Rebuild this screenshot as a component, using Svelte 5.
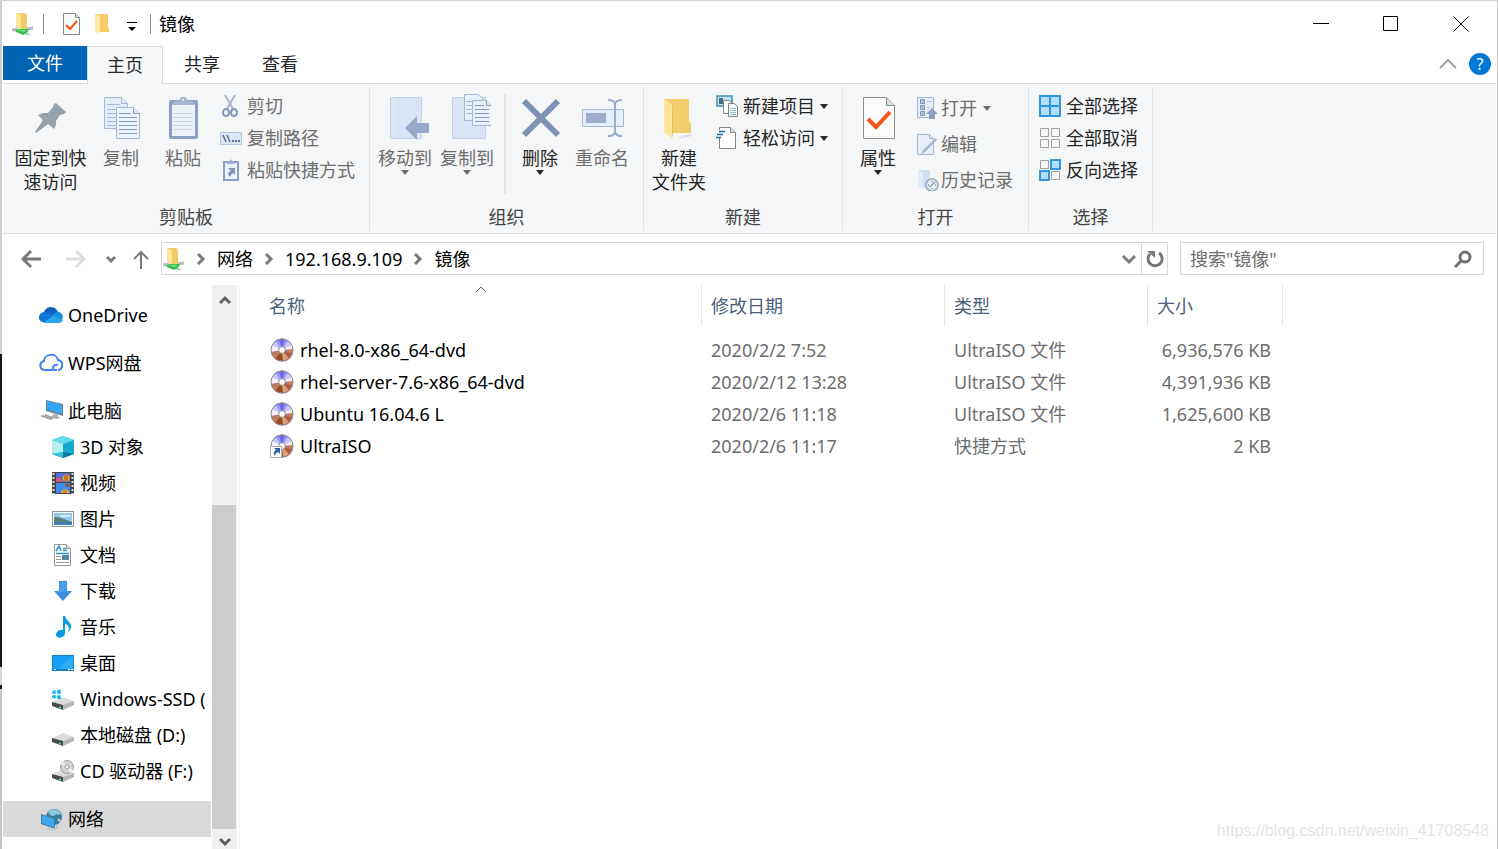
<script>
	// ICONS

	const netFolder =
		'<path d="M4 0h10v2h1v14H7z" fill="#f0cb66"/><path d="M4 0l5 2v14l-5-2z" fill="#ffe597"/><path d="M0 17l6-1M21 15l-6 1" stroke="#b9bcc0" stroke-width="3"/><path d="M3 17l5-1 9 0-2 4-4 2-7-3z" fill="#35c050"/><path d="M6 17h8l-2 2z" fill="#83e28c"/><path d="M14 21l4 1" stroke="#b9bcc0" stroke-width="2"/>';
	const folder =
		'<path d="M3 1h13v13l1 1v4H6z" fill="#f4cd69"/><path d="M3 1l5 3v14l-1 3-4-3z" fill="#ffe8a0"/>';
	const disc =
		'<circle cx="12" cy="12" r="11" fill="#f4f2f8"/><path d="M12 12L2 7A11 11 0 0 1 22 7z" fill="#c9c7f8"/><path d="M12 12L5 3A11 11 0 0 1 18 3z" fill="#9c9af4"/><path d="M12 12L9 1a11 11 0 0 1 6 0z" fill="#6d69ee"/><path d="M12 12L1 14a11 11 0 0 0 22-3z" fill="#c07c58"/><path d="M12 12L5 21a11 11 0 0 0 8 2z" fill="#9a4a28"/><path d="M12 12l1 11a11 11 0 0 0 6-3z" fill="#dda27d"/><path d="M12 12l7 8a11 11 0 0 0 3-4z" fill="#aa5c38"/><circle cx="12" cy="12" r="11" fill="none" stroke="#8b8791" stroke-width="1"/><circle cx="12" cy="12" r="3.4" fill="#fff" stroke="#8d8a96"/>';
	const drive =
		'<path d="M0 14l11-5 11 4-10 5z" fill="#dcdcdd"/><path d="M11 17l11-4v4l-11 5z" fill="#b5b5b6"/><path d="M0 14l11 3v5L0 18z" fill="#4a4a4b"/><path d="M7 19l2 1" stroke="#4ee06a" stroke-width="1.4"/>';

	const icons = {
		netFolder,
		folder,
		disc,
		drive,
		shortcut:
			disc +
			'<path d="M.5 12.500h11v11h-11z" fill="#fff" stroke="#aaa"/><path d="M4 14h6v6l-2-2c-2 1-3 2-3 4-2-3-1-5 1-6z" fill="#2b5fa8"/>',
		checkDoc:
			'<path d="M2.500.500h12l4 4v17h-16z" fill="#fafafa" stroke="#8a8a8a"/><path d="M14.500.500v4h4" fill="#ddd" stroke="#8a8a8a"/><path d="M5 12l4 4 7-8" fill="none" stroke="#f1591b" stroke-width="2.200"/>',

		// large ribbon icons
		pin: '<path d="M29 9l10 9-2 2-4 1-4 6v4l-2 4-6-5L9 39l-1-1 8-12-5-5 5-2h5l5-6 1-3z" fill="#96a2ab"/>',
		copy: '<g fill="#e2ebf8" stroke="#a4b7d8"><path d="M7.500 3.500h17l6 6v25h-23z"/><path d="M24.500 3.500v6h6M10 10.500h13M10 15.500h18M10 19.500h18M10 23.500h18M10 27.500h18M10 31.500h18"/><path d="M19.500 13.500h17l6 6v25h-23z" fill="#edf3fc"/><path d="M36.500 13.500v6h6M22 19.500h12M22 23.500h18M22 27.500h18M22 31.500h18M22 35.500h18M22 39.500h18" stroke="#8299c2"/></g>',
		paste:
			'<rect x="10" y="6" width="29" height="39" rx="2" fill="#8ba0c5"/><path d="M13 10h23v32H13z" fill="#edf2fa"/><path d="M14 19.500h20M14 23.500h20M14 27.500h20M14 31.500h20M14 35.500h20" stroke="#cbd7e9"/><path d="M13 11l3-4h4l2-4h5l2 4h4l3 4z" fill="#a9b8d2"/><circle cx="24" cy="6" r="1" fill="#edf2fa"/>',
		moveTo: '<path d="M9.500 3.500h31v41h-31z" fill="#d9e4f4" stroke="#c2d1e6"/><path d="M13 5v38" stroke="#e8eff9"/><path d="M24 34l12-12v7h12v10H36v7z" fill="#97a9c8"/>',
		copyTo:
			'<path d="M9.500 3.500h33v41h-33z" fill="#d9e4f4" stroke="#c2d1e6"/><g fill="#e9f1fb" stroke="#a4b7d8"><path d="M21.500.500h14l4 4v22h-18z"/><path d="M23 7.500h13M23 11.500h13M23 15.500h13M23 19.500h13"/><path d="M29.500 6.500h14l5 5v20h-19z"/><path d="M43.500 6.500v5h5M32 11.500h9M32 15.500h14M32 19.500h14M32 23.500h14M32 27.500h14" stroke="#8299c2"/></g>',
		remove: '<path d="M8 7l34 34M42 7L8 41" stroke="#7e92b5" stroke-width="6"/>',
		rename:
			'<path d="M4.500 15.500h41v17h-41z" fill="#e6eefa" stroke="#a5b7d5"/><path d="M8 19h20v10H8z" fill="#9badcb"/><path d="M30 6c5 0 7 2 7 5v26c0 3-2 5-7 5M44 6c-5 0-7 2-7 5M37 37c0 3 2 5 7 5" fill="none" stroke="#9aabc8" stroke-width="2"/>',
		newFolder:
			'<path d="M20 45l17-3-3-2z" fill="#d9dadd"/><path d="M9 5h25v22l2 2v10H18z" fill="#f3cd6b"/><path d="M9 5l9 7v33l-9-7z" fill="#ffe49a"/><path d="M17 12l1-1v29l-1 3z" fill="#e9bd59"/>',
		properties:
			'<path d="M9.500 3.500h23l8 8v33h-31z" fill="#fbfbfb" stroke="#8c8c8c"/><path d="M32.500 3.500v8h8" fill="#dedede" stroke="#8c8c8c"/><path d="M14 25l8 8 14-15" fill="none" stroke="#f1591b" stroke-width="4"/>',

		// small ribbon icons
		cut: '<path d="M5 0l8 14M15 0L7 14" stroke="#a7b4cb" stroke-width="2"/><ellipse cx="6" cy="17.500" rx="3" ry="3.500" fill="none" stroke="#8398bd" stroke-width="2"/><ellipse cx="14" cy="17.500" rx="3" ry="3.500" fill="none" stroke="#8398bd" stroke-width="2"/>',
		path: '<path d="M.500 5.500h21v12H.500z" fill="#dce8f6" stroke="#b5c6df"/><path d="M3 8l3 7M7 8l3 7" stroke="#5d7195" stroke-width="1.500"/><path d="M12 14h2m1 0h2m1 0h2" stroke="#5d7195" stroke-width="2"/>',
		pasteLink:
			'<path d="M4 3h14v18H4z" fill="#edf3fb" stroke="#8ba0c5" stroke-width="2"/><path d="M7 5V3h2l2-3 2 3h2v2z" fill="#a0b2d0"/><path d="M8 9h7v7l-2-2c-2 1-2 2-3 4-3-3-2-5 1-6z" fill="#7a90b5"/>',
		newItem:
			'<path d="M1 1h15v10H1z" fill="#c5e5f4" stroke="#3f91b8" stroke-width="1.500"/><path d="M3 3h4v6H3z" fill="#47717c"/><g fill="#fff" stroke="#858585"><path d="M7.500 5.500h6l3 3v10h-9z"/><path d="M12.500 8.500h6l3 3v10h-9z"/></g><path d="M14 13.500h6M14 15.500h6M14 17.500h6M14 19.500h6" stroke="#9db9d8"/>',
		easyAccess:
			'<path d="M3.500.500h11l5 5v16h-16z" fill="#fff" stroke="#858585"/><path d="M14.500.500v5h5" fill="#ddd" stroke="#858585"/><path d="M0 3h8v7H0z" fill="#f5f6f7"/><path d="M3 4.500h6M1 7.500h6M0 10.500h5" stroke="#1f69b0" stroke-width="1.500"/>',
		open: '<path d="M.500.500h16v20H.500z" fill="#e8effa" stroke="#a5b7d5"/><g fill="#b0bfd7" stroke="#7f94b8"><path d="M3.500 2.500h4v4h-4zM3.500 8.500h4v4h-4zM3.500 14.500h4v4h-4z"/></g><path d="M10 4.500h5M10 10.500h3" stroke="#bac9df"/><path d="M9 17l6-6 6 6h-3v5h-6v-5z" fill="#8b9fbf"/>',
		edit: '<path d="M.500 1.500h12l4 4v16H.500z" fill="#e8effa" stroke="#a5b7d5"/><path d="M12.500 1.500v4h4" fill="none" stroke="#a5b7d5"/><path d="M6 17L19 5l1 2L8 19l-4 2z" fill="#a5b4cd"/>',
		history:
			'<path d="M1 1h12v18H6z" fill="#d1deef"/><path d="M1 1l5 3v17l-5-3z" fill="#e3ecf8"/><circle cx="15" cy="16" r="6" fill="#eaf0f8" stroke="#a6b4c9" stroke-width="2"/><path d="M11 16h1M18 16h1M15 12v1M15 19v1M12 18l3-2 3-3" fill="none" stroke="#8497b5" stroke-width="1.500"/>',
		selectAll:
			'<path d="M0 0h22v22H0z" fill="#3297e3"/><path d="M2 2h8v8H2zM12 2h8v8h-8zM2 12h8v8H2zM12 12h8v8h-8z" fill="#b3dffc"/>',
		selectNone:
			'<path d="M1.500 1.500h8v8h-8zM12.500 1.500h8v8h-8zM1.500 12.500h8v8h-8zM12.500 12.500h8v8h-8z" fill="#f7f7f7" stroke="#a0a0a0"/>',
		invert:
			'<path d="M1.500 1.500h8v8h-8zM12.500 12.500h8v8h-8z" fill="#f7f7f7" stroke="#a0a0a0"/><path d="M12 1h9v9h-9zM1 12h9v9H1z" fill="#b3dffc" stroke="#3297e3" stroke-width="2"/>',

		// navigation tree
		onedrive:
			'<path d="M4 12c0-3 3-8 8-8 4 0 6 3 7 5l-6 5z" fill="#0a62bd"/><path d="M3 19c-5-2-4-10 3-10 3 0 5 2 9 4l-8 6z" fill="#0f78d4"/><path d="M13 13c2-4 5-4 6-4 4 0 6 4 4 8z" fill="#1490df"/><path d="M4 20l10-7 10 4c-1 2-2 3-4 3z" fill="#28a8ea"/>',
		wps: '<path d="M18 19h-3c-3-3 1-6 4-5M14 19H6c-6 0-6-8-1-9 0-7 12-9 14-1 6 1 5 10 0 10" fill="none" stroke="#3f82f1" stroke-width="2"/>',
		computer:
			'<path d="M7 1l17 4v12L7 12z" fill="#707f8c"/><path d="M8 2l15 4v9L8 11z" fill="#35a8f5"/><path d="M15 15l4 1v2l3 1-5 1-5-2z" fill="#a9adb1"/><path d="M0 17l6-2 11 4-6 2z" fill="#c5c9cd"/><path d="M3 17l10 3M6 16l8 3" stroke="#8c9399"/>',
		cube: '<path d="M0 4l11-4 11 4v14l-11 4-11-4z" fill="#15a9cf"/><path d="M0 4l11-4 11 4-11 4z" fill="#64dce9"/><path d="M0 4l11 4v8L0 18z" fill="#b7eef1"/><path d="M11 16l11 2-11 4z" fill="#07789b"/><path d="M11 16L0 18l11 4z" fill="#37c0d5"/>',
		video:
			'<path d="M0 0h22v22H0z" fill="#454545"/><path d="M4 1h14v9H4z" fill="#4d6fe0"/><path d="M4 11h14v10H4z" fill="#3e8ced"/><path d="M1.500 1v21M20.500 1v21" stroke="#d9d9d9" stroke-width="2" stroke-dasharray="2 2"/><path d="M4 6l3-1 4 5H4z" fill="#df5175"/><circle cx="14" cy="6" r="3.500" fill="#e9b217"/><path d="M13 3v6M15 3v6" stroke="#b32f28"/><path d="M13 12h5l-2 3h-2z" fill="#a8452c"/><path d="M9 21c1-5 7-5 8 0z" fill="#eebd23"/><path d="M12 18v3M14 18v3" stroke="#d8432e"/>',
		picture:
			'<path d="M.500 3.500h21v15H.500z" fill="#fff" stroke="#8d9499"/><path d="M2 5h18v12H2z" fill="#8ecaf2"/><path d="M8 7h10v2H9z" fill="#d5edfa"/><path d="M2 9c6 0 10 2 18 5v1H2z" fill="#568278"/><path d="M2 14h18v3H2z" fill="#3e7eb0"/>',
		document:
			'<path d="M2.500.500h12l4 4v17h-16z" fill="#fff" stroke="#969696"/><path d="M14.500.500v4h4" fill="#ddd" stroke="#969696"/><path d="M4 7l3-5 2 5M11 4.500h3M11 6.500h4M4 9.500h13" fill="none" stroke="#3191c9" stroke-width="1.500"/><path d="M4 12.500h5M4 15.500h5M4 18.500h13" stroke="#9a9a9a"/><path d="M10 11h7v5h-7z" fill="#58889e"/>',
		download: '<path d="M7 1h8v10h5l-9 10-9-10h5z" fill="#3890df"/><path d="M8 2h6v10H8z" fill="#4ca0ea"/>',
		music:
			'<path d="M11 0h2c1 5 7 6 6 12-1 2-2 3-3 4 2-6 0-7-3-8v9c0 6-10 6-9 1 1-4 5-5 7-4z" fill="#0a9be5"/>',
		desktop:
			'<path d="M0 3h22v16H0z" fill="#137fc5"/><path d="M1 4h20v13H1z" fill="#16a0f7"/><path d="M21 4v13H6z" fill="#32abf9"/><path d="M2 17.500h2m12 0h2m1 0h2" stroke="#fff"/>',
		windows:
			drive +
			'<path d="M0 3l4-1v4H0zM5 2l4-1v5H5zM0 7h4v4l-4-1zM5 7h4v5l-4-1z" fill="#0ab5f2" stroke="#fff" stroke-width=".5"/>',
		cd:
			drive +
			'<circle cx="15" cy="7" r="6.500" fill="#d1d4d5" stroke="#989c9f"/><path d="M15 7L9 4l2-3zM15 7l6 3-3 3z" fill="#f0f0f0"/><circle cx="15" cy="7" r="2" fill="#fff" stroke="#999"/>',
		network:
			'<circle cx="15" cy="10" r="8" fill="#347f9f"/><path d="M9 5c5-5 11-2 13 2-3 2-4-1-6 1s-5 1-7-3z" fill="#8cc9da"/><path d="M2 7l14 4v11L2 17z" fill="#55788b"/><path d="M3 8l12 4v9L3 16z" fill="#37aaf2"/><path d="M8 21c4 3 8 2 11-2M19 12l3 3" fill="none" stroke="#bec7cb" stroke-width="2"/>',
	};

	// DATA

	const tabs = ["共享", "查看"];

	const groups = [
		{
			label: "剪贴板",
			name: "clipboard",
			large: [
				{ icon: "pin", lines: ["固定到快", "速访问"], wide: true },
				{ icon: "copy", lines: ["复制"], disabled: true },
				{ icon: "paste", lines: ["粘贴"], disabled: true },
			],
			small: [
				{ icon: "cut", label: "剪切", disabled: true },
				{ icon: "path", label: "复制路径", disabled: true },
				{ icon: "pasteLink", label: "粘贴快捷方式", disabled: true },
			],
		},
		{
			label: "组织",
			name: "organize",
			large: [
				{ icon: "moveTo", lines: ["移动到"], menu: true, disabled: true },
				{ icon: "copyTo", lines: ["复制到"], menu: true, disabled: true },
				{ icon: "remove", lines: ["删除"], menu: true, divider: true },
				{ icon: "rename", lines: ["重命名"], disabled: true },
			],
			small: [],
		},
		{
			label: "新建",
			name: "new",
			large: [{ icon: "newFolder", lines: ["新建", "文件夹"] }],
			small: [
				{ icon: "newItem", label: "新建项目", menu: true },
				{ icon: "easyAccess", label: "轻松访问", menu: true },
			],
		},
		{
			label: "打开",
			name: "open",
			large: [{ icon: "properties", lines: ["属性"], menu: true }],
			small: [
				{ icon: "open", label: "打开", menu: true, disabled: true },
				{ icon: "edit", label: "编辑", disabled: true },
				{ icon: "history", label: "历史记录", disabled: true },
			],
		},
		{
			label: "选择",
			name: "select",
			large: [],
			small: [
				{ icon: "selectAll", label: "全部选择" },
				{ icon: "selectNone", label: "全部取消" },
				{ icon: "invert", label: "反向选择" },
			],
		},
	];

	const crumbs = ["网络", "192.168.9.109", "镜像"];

	const tree = [
		[{ icon: "onedrive", label: "OneDrive" }],
		[{ icon: "wps", label: "WPS网盘" }],
		[
			{ icon: "computer", label: "此电脑" },
			{ icon: "cube", label: "3D 对象", child: true },
			{ icon: "video", label: "视频", child: true },
			{ icon: "picture", label: "图片", child: true },
			{ icon: "document", label: "文档", child: true },
			{ icon: "download", label: "下载", child: true },
			{ icon: "music", label: "音乐", child: true },
			{ icon: "desktop", label: "桌面", child: true },
			{ icon: "windows", label: "Windows-SSD (", child: true },
			{ icon: "drive", label: "本地磁盘 (D:)", child: true },
			{ icon: "cd", label: "CD 驱动器 (F:)", child: true },
		],
		[{ icon: "network", label: "网络" }],
	];

	const files = [
		{ icon: "disc", name: "rhel-8.0-x86_64-dvd", date: "2020/2/2 7:52", type: "UltraISO 文件", size: "6,936,576 KB" },
		{ icon: "disc", name: "rhel-server-7.6-x86_64-dvd", date: "2020/2/12 13:28", type: "UltraISO 文件", size: "4,391,936 KB" },
		{ icon: "disc", name: "Ubuntu 16.04.6 L", date: "2020/2/6 11:18", type: "UltraISO 文件", size: "1,625,600 KB" },
		{ icon: "shortcut", name: "UltraISO", date: "2020/2/6 11:17", type: "快捷方式", size: "2 KB" },
	];

	// STATE

	let selected = $state("网络");
	let query = $state("");
</script>

{#snippet icon(name, size)}
	<svg width={size} height={size} viewBox="0 0 {size} {size}" aria-hidden="true">{@html icons[name]}</svg>
{/snippet}

{#snippet chevron(points, size, color)}
	<svg width={size} height={size} viewBox="0 0 {size} {size}" aria-hidden="true">
		<polyline {points} fill="none" stroke={color} stroke-width="3" />
	</svg>
{/snippet}

<div class="window">
	<header class="titlebar">
		<div class="quick">
			{@render icon("netFolder", 22)}
			<span class="bar"></span>
			<button aria-label="属性">{@render icon("checkDoc", 22)}</button>
			<button aria-label="新建文件夹">{@render icon("folder", 22)}</button>
			<button class="customize" aria-label="自定义快速访问工具栏">
				<svg width="10" height="10"><path d="M0 .5h10" stroke="#000" /><path d="M1 5h8L5 9z" /></svg>
			</button>
			<span class="bar"></span>
		</div>
		<h1>镜像</h1>
		<div class="controls">
			<button aria-label="最小化"><svg width="16" height="16"><path d="M0 7.500h16" /></svg></button>
			<button aria-label="最大化"><svg width="16" height="16"><path d="M.5.5h14v14h-14z" /></svg></button>
			<button aria-label="关闭"><svg width="16" height="16"><path d="M.5.5l15 15M15.500.5l-15 15" /></svg></button>
		</div>
	</header>

	<nav class="tabs">
		<button class="file">文件</button>
		<button class="active">主页</button>
		{#each tabs as tab}
			<button>{tab}</button>
		{/each}
		<span class="spacer"></span>
		<button class="collapse" aria-label="折叠功能区">
			<svg width="18" height="12"><path d="M1 10l8-8 8 8" fill="none" stroke="#a0a0a0" stroke-width="2" /></svg>
		</button>
		<button class="help" aria-label="帮助"><span>?</span></button>
	</nav>

	<section class="ribbon">
		{#each groups as group}
			<div class="group {group.name}">
				<div class="commands">
					{#each group.large as item}
						{#if item.divider}
							<span class="divider"></span>
						{/if}
						<button class="large" class:wide={item.wide} disabled={item.disabled}>
							{@render icon(item.icon, 48)}
							{#each item.lines as line}
								<span>{line}</span>
							{/each}
							{#if item.menu}<i class="arrow"></i>{/if}
						</button>
					{/each}
					{#if group.small.length}
						<div class="stack">
							{#each group.small as item}
								<button class="small" disabled={item.disabled}>
									{@render icon(item.icon, 22)}
									<span>{item.label}</span>
									{#if item.menu}<i class="arrow"></i>{/if}
								</button>
							{/each}
						</div>
					{/if}
				</div>
				<div class="group-label">{group.label}</div>
			</div>
		{/each}
	</section>

	<div class="navbar">
		<button class="nav" aria-label="后退">
			<svg width="20" height="18"><path d="M10 1L2 9l8 8M2 9h18" fill="none" stroke="#7a7a7a" stroke-width="3" /></svg>
		</button>
		<button class="nav" aria-label="前进" disabled>
			<svg width="20" height="18"><path d="M10 1l8 8-8 8M18 9H0" fill="none" stroke="#dedede" stroke-width="3" /></svg>
		</button>
		<button class="recent" aria-label="最近浏览的位置">{@render chevron("1,3 5,7 9,3", 10, "#7a7a7a")}</button>
		<button class="up" aria-label="上移">
			<svg width="16" height="20"><path d="M1 10l7-7 7 7M8 3v17" fill="none" stroke="#7a7a7a" stroke-width="2" /></svg>
		</button>
		<div class="address">
			{@render icon("netFolder", 22)}
			{#each crumbs as crumb}
				<span class="step">{@render chevron("3,1 8,6 3,11", 12, "#7a7a7a")}</span>
				<a href="#{crumb}">{crumb}</a>
			{/each}
			<span class="spacer"></span>
			<button class="history" aria-label="以前的位置">{@render chevron("1,4 7,10 13,4", 14, "#7a7a7a")}</button>
			<button class="refresh" aria-label="刷新">
				<svg width="18" height="18">
					<path d="M13 3a7 7 0 1 1-9 1" fill="none" stroke="#7a7a7a" stroke-width="3" />
					<path d="M1 1h8v7z" fill="#7a7a7a" />
				</svg>
			</button>
		</div>
		<label class="search">
			<input type="text" placeholder={'搜索"镜像"'} aria-label="搜索" bind:value={query} />
			<svg width="18" height="18">
				<circle cx="11" cy="7" r="5" fill="none" stroke="#707070" stroke-width="3" />
				<path d="M8 10l-7 7" stroke="#707070" stroke-width="3" />
			</svg>
		</label>
	</div>

	<main>
		<aside>
			<div class="tree">
				{#each tree as branch}
					<div class="branch">
						{#each branch as node}
							<button
								class="node"
								class:child={node.child}
								class:selected={selected === node.label}
								onclick={() => (selected = node.label)}
							>
								{@render icon(node.icon, node.child ? 22 : 24)}
								<span>{node.label}</span>
							</button>
						{/each}
					</div>
				{/each}
			</div>
			<div class="scrollbar">
				<button aria-label="向上滚动">{@render chevron("1,9 6,4 11,9", 12, "#606060")}</button>
				<div class="track"><div class="thumb"></div></div>
				<button aria-label="向下滚动">{@render chevron("1,4 6,9 11,4", 12, "#606060")}</button>
			</div>
		</aside>

		<div class="list">
			<table>
				<thead>
					<tr>
						<th class="name">
							名称
							<svg class="sort" width="12" height="7"><path d="M1 6l5-5 5 5" fill="none" stroke="#707070" /></svg>
						</th>
						<th class="date">修改日期</th>
						<th class="type">类型</th>
						<th class="size">大小</th>
					</tr>
				</thead>
				<tbody>
					{#each files as file}
						<tr>
							<td class="name"><div>{@render icon(file.icon, 24)}<span>{file.name}</span></div></td>
							<td>{file.date}</td>
							<td>{file.type}</td>
							<td class="size">{file.size}</td>
						</tr>
					{/each}
				</tbody>
			</table>
		</div>
	</main>

	<span class="watermark">https://blog.csdn.net/weixin_41708548</span>
</div>

<style>
	:global(body) {
		margin: 0;
		background: #fff;
	}

	.window {
		position: relative;
		display: flex;
		flex-direction: column;
		box-sizing: border-box;
		height: 100vh;
		padding: 1px 2px 0 3px;
		overflow: hidden;
		background:
			linear-gradient(#d0d0d0, #d0d0d0) top / 100% 1px no-repeat,
			linear-gradient(#cfcfcf 0 354px, #15191c 354px 667px, #d5d5d5 667px 685px, #15191c 685px 689px, #c6c6c6 689px) left / 2px 100% no-repeat,
			linear-gradient(#c8c8c8, #c8c8c8) right / 1px 100% no-repeat,
			#fff;
		font-family: "Noto Sans", "Noto Sans CJK SC", sans-serif;
		font-size: 18px;
		line-height: 24px;
		color: #000;
	}

	button {
		margin: 0;
		padding: 0;
		border: 0;
		background: none;
		font: inherit;
		color: inherit;
	}

	svg {
		display: block;
		flex: none;
	}

	.spacer {
		flex: 1;
	}

	.arrow {
		width: 0;
		height: 0;
		border: 4px solid transparent;
		border-top: 5px solid currentColor;
		border-bottom: 0;
	}

	/* title bar */

	.titlebar {
		display: flex;
		align-items: center;
		height: 45px;
	}

	.quick {
		display: flex;
		align-items: center;
		gap: 9px;
		padding-left: 9px;
	}

	.quick .bar {
		width: 1px;
		height: 20px;
		background: #8c8c8c;
	}

	.quick .bar + button {
		margin-left: 8px;
	}

	.customize {
		display: flex;
		justify-content: center;
		width: 18px;
		padding-top: 6px;
	}

	h1 {
		flex: 1;
		margin: 0;
		padding-left: 8px;
		font-size: 18px;
		font-weight: 400;
	}

	.controls {
		display: flex;
	}

	.controls button {
		display: flex;
		align-items: center;
		justify-content: center;
		width: 70px;
		height: 44px;
	}

	.controls path {
		fill: none;
		stroke: #000;
	}

	/* tabs */

	.tabs {
		display: flex;
		align-items: flex-start;
		height: 37px;
		border-bottom: 1px solid #dadbdc;
	}

	.tabs button {
		height: 37px;
		padding: 0 21px 2px;
		color: #262626;
	}

	.tabs .file {
		height: 34px;
		padding: 0 24px;
		background: #0063b1;
		color: #fff;
	}

	.tabs .active {
		height: 38px;
		padding: 0 19px 2px;
		border: 1px solid #dadbdc;
		border-bottom: 0;
		background: #f5f6f7;
	}

	.tabs .collapse {
		padding: 0 12px 2px;
	}

	.tabs .help {
		padding: 0 5px 2px 0;
	}

	.help span {
		display: block;
		width: 22px;
		border-radius: 50%;
		background: #0078d7;
		color: #fff;
		font-size: 16px;
		line-height: 22px;
	}

	/* ribbon */

	.ribbon {
		display: flex;
		height: 149px;
		border-bottom: 1px solid #dadbdc;
		background: #f5f6f7;
		color: #262626;
	}

	.group {
		display: flex;
		flex-direction: column;
		justify-content: space-between;
		margin: 3px 0 2px;
		padding-top: 3px;
		border-right: 1px solid #e2e3e4;
	}

	.commands {
		display: flex;
		padding: 0 14px 0 4px;
	}

	.clipboard .commands {
		padding-left: 8px;
	}

	.organize .commands {
		padding-right: 10px;
	}

	.open .commands {
		padding-right: 15px;
	}

	.large {
		display: flex;
		flex-direction: column;
		align-items: center;
		width: 62px;
		padding-top: 4px;
		white-space: nowrap;
	}

	.large.wide {
		width: 79px;
	}

	.large svg {
		margin-bottom: 4px;
	}

	button:disabled {
		color: #6d6d6d;
	}

	.divider {
		width: 2px;
		height: 100px;
		margin: 4px 3px 0 6px;
		background: #e2e3e4;
	}

	.stack {
		display: flex;
		flex-direction: column;
		padding-left: 6px;
	}

	.open .stack {
		padding-left: 8px;
	}

	.small {
		display: flex;
		align-items: center;
		gap: 5px;
		height: 32px;
		white-space: nowrap;
	}

	.open .small {
		gap: 2px;
		height: 36px;
	}

	.open .small .arrow {
		margin-left: 4px;
	}

	.group-label {
		padding-bottom: 2px;
		text-align: center;
		color: #444;
	}

	/* address row */

	.navbar {
		display: flex;
		align-items: flex-start;
		gap: 5px;
		padding: 8px 12px 10px 8px;
	}

	.navbar button {
		display: flex;
		align-items: center;
		justify-content: center;
		height: 33px;
	}

	.nav {
		width: 40px;
	}

	.recent {
		width: 20px;
	}

	.up {
		width: 30px;
	}

	.address,
	.search {
		display: flex;
		align-items: center;
		box-sizing: border-box;
		height: 33px;
		border: 1px solid #d9d9d9;
	}

	.address {
		flex: 1;
		padding-left: 1px;
	}

	.address a {
		color: inherit;
		text-decoration: none;
	}

	.step {
		padding: 0 10px;
	}

	.address .history {
		width: 24px;
	}

	.address .refresh {
		width: 26px;
		border-left: 1px solid #d9d9d9;
	}

	.search {
		flex: 0 1 304px;
		margin-left: 7px;
		padding: 0 11px 0 9px;
	}

	.search input {
		flex: 1;
		min-width: 0;
		padding: 0;
		border: 0;
		outline: 0;
		background: none;
		font: inherit;
	}

	.search input::placeholder {
		color: #6d6d6d;
		opacity: 1;
	}

	/* navigation pane */

	main {
		display: flex;
		flex: 1;
		min-height: 0;
	}

	aside {
		display: flex;
		flex: none;
		width: 235px;
		border-right: 2px solid #f7f7f7;
	}

	.tree {
		flex: 1;
		min-width: 0;
		padding-top: 12px;
		overflow: hidden;
	}

	.branch + .branch {
		margin-top: 12px;
	}

	.node {
		display: flex;
		align-items: center;
		gap: 5px;
		width: 100%;
		height: 36px;
		padding-left: 36px;
		white-space: nowrap;
	}

	.node.child {
		gap: 6px;
		padding-left: 49px;
	}

	.node.selected {
		background: #d9d9d9;
	}

	.scrollbar {
		display: flex;
		flex-direction: column;
		width: 25px;
		margin: 0 1px;
		background: #f0f0f0;
	}

	.scrollbar button {
		display: flex;
		align-items: center;
		justify-content: center;
		height: 30px;
	}

	.scrollbar button:last-child {
		height: 20px;
		padding-top: 4px;
	}

	.track {
		display: flex;
		flex-direction: column;
		justify-content: flex-end;
		flex: 1;
	}

	.thumb {
		height: 63%;
		margin-right: 1px;
		background: #cdcdcd;
	}

	/* file list */

	.list {
		flex: 1;
		min-width: 0;
	}

	table {
		border-collapse: separate;
		border-spacing: 0;
		table-layout: fixed;
		width: 1043px;
	}

	th {
		position: relative;
		box-sizing: border-box;
		height: 41px;
		padding: 0 0 0 9px;
		border-right: 1px solid #e5e5e5;
		font-weight: 400;
		text-align: left;
		color: #4c607a;
	}

	th.name {
		width: 462px;
		padding-left: 29px;
	}

	th.date {
		width: 243px;
	}

	th.type {
		width: 203px;
	}

	.sort {
		position: absolute;
		top: 1px;
		left: 51%;
	}

	tbody::before {
		content: "";
		display: block;
		height: 8px;
	}

	td {
		height: 32px;
		padding: 0 0 0 9px;
		color: #6d6d6d;
		white-space: nowrap;
	}

	td.name {
		padding-left: 30px;
		color: #000;
	}

	td.name div {
		display: flex;
		align-items: center;
		gap: 6px;
	}

	td.size {
		padding-right: 12px;
		text-align: right;
	}

	.watermark {
		position: absolute;
		right: 9px;
		bottom: 6px;
		font-family: "Liberation Sans", sans-serif;
		font-size: 16px;
		color: #e4e4e4;
	}
</style>
